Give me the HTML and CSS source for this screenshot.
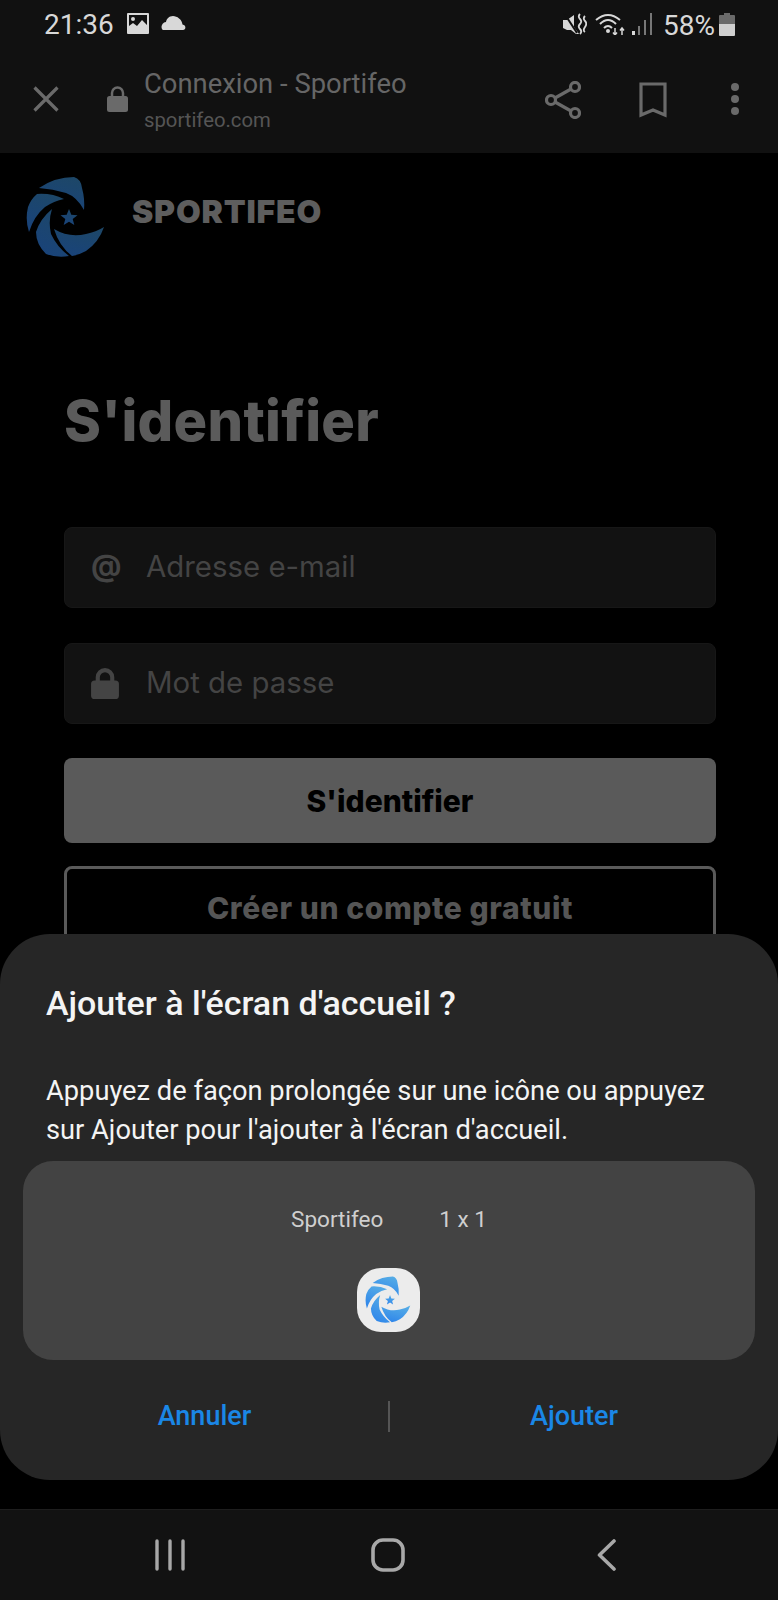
FILE: index.html
```html
<!DOCTYPE html>
<html lang="fr">
<head>
<meta charset="utf-8">
<title>Connexion - Sportifeo</title>
<link rel="stylesheet" href="styles.css">
</head>
<body>
<svg class="defs" aria-hidden="true">
  <defs>
    <linearGradient id="dim" x1="0.7" y1="0" x2="0.3" y2="1"><stop offset="0" stop-color="#1d4768"/><stop offset="1" stop-color="#19437a"/></linearGradient>
    <linearGradient id="bright" x1="0.7" y1="0" x2="0.3" y2="1"><stop offset="0" stop-color="#55ace6"/><stop offset="1" stop-color="#2f86ea"/></linearGradient>
    <symbol id="swirl" viewBox="7 10 79 83">
      <path d="M20 22Q36 11 55 11Q62 13 63 22Q66 33 65 44Q58 31 47 27Q34 23 20 22Z"/>
      <path d="M45 33Q33 27 18 28Q12 33 9 41Q6 54 10 66Q15 50 26 41Q35 35 45 33Z"/>
      <path d="M33 43Q21 53 17 66Q17 78 27 88Q38 92 50 90Q38 81 32 68Q29 55 33 43Z"/>
      <path d="M35 63Q50 72 67 68Q77 66 85 61Q80 76 67 85Q60 89 53 90Q40 80 35 63Z"/>
      <path d="M50 43L52.300 48.800L58.500 49.200L53.700 53.100L55.300 59.100L50 55.800L44.700 59.100L46.300 53.100L41.500 49.200L47.700 48.800Z"/>
    </symbol>
  </defs>
</svg>
<div class="phone">
  <header class="chrome">
    <div class="status">
      <div class="status-left">
        <span class="time">21:36</span>
        <svg class="st-image" viewBox="0 0 22 21"><path fill="#d8d8d8" fill-rule="evenodd" d="M1 0H21a1 1 0 0 1 1 1V20a1 1 0 0 1-1 1H1a1 1 0 0 1-1-1V1a1 1 0 0 1 1-1ZM2 2V13L6 10L10 13L15 7L20 12V2ZM6 4a2 2 0 1 1 0 4a2 2 0 0 1 0-4Z"/></svg>
        <svg class="st-cloud" viewBox="0 0 25 14"><path fill="#d8d8d8" d="M3 14H22C25 14 25.500 9 21.500 8.500C21 3.500 16 0 12 0C8 0 5.500 3 5 6C0 6.500 -1 14 3 14Z"/></svg>
      </div>
      <div class="status-right">
        <svg class="st-mute" viewBox="0 0 24 22"><path fill="#d8d8d8" d="M0 7H4L11 2V14L16 21H13L8 17H4L0 15Z"/><path d="M1 0L14 20" stroke="#111" stroke-width="2"/><path d="M17 1Q14.500 3.500 17 6T17 11T17 16T17 21M22 3Q19.500 5.500 22 8T22 14T22 19" fill="none" stroke="#d8d8d8" stroke-width="1.800"/></svg>
        <svg class="st-wifi" viewBox="0 0 30 22"><g fill="none" stroke="#d8d8d8" stroke-width="2"><path d="M1 7Q13 -3 25 7"/><path d="M5 11Q13 3 21 11"/><path d="M9 15Q13 11 17 15"/></g><circle cx="13" cy="18" r="2" fill="#d8d8d8"/><path d="M20 15V22M18 19.500L20 22L22 19.500M27 22V15M25 17.500L27 15L29 17.500" fill="none" stroke="#d8d8d8" stroke-width="1.500"/></svg>
        <svg class="st-signal" viewBox="0 0 21 22"><rect x="0" y="18" width="3" height="4" fill="#d8d8d8"/><rect x="6" y="13" width="2" height="9" fill="#777"/><rect x="12" y="7" width="2" height="15" fill="#777"/><rect x="18" y="0" width="2" height="22" fill="#777"/></svg>
        <span class="pct">58%</span>
        <svg class="st-batt" viewBox="0 0 16 23"><path fill="#6a6a6a" d="M5 0H11V2H15a1 1 0 0 1 1 1V11H0V3a1 1 0 0 1 1-1H5Z"/><path fill="#cfcfcf" d="M0 11H16V22a1 1 0 0 1-1 1H1a1 1 0 0 1-1-1Z"/></svg>
      </div>
    </div>
    <div class="toolbar">
      <svg class="tb-close" viewBox="0 0 26 26"><path d="M1.500 1.500L24.500 24.500M24.500 1.500L1.500 24.500" stroke="#6a6a6a" stroke-width="3.200" fill="none"/></svg>
      <svg class="tb-lock" viewBox="0 0 21 26"><path d="M5 12V7a5.500 5.500 0 0 1 11 0V12" fill="none" stroke="#6a6a6a" stroke-width="2.500"/><rect x="0" y="10" width="21" height="16" rx="2.500" fill="#6a6a6a"/></svg>
      <div class="url">
        <span class="url-title">Connexion - Sportifeo</span>
        <span class="url-host">sportifeo.com</span>
      </div>
      <div class="tb-actions">
        <svg class="tb-share" viewBox="0 0 36 38"><g fill="none" stroke="#6a6a6a" stroke-width="3.200"><circle cx="6" cy="19" r="4.500"/><circle cx="30" cy="6" r="4.500"/><circle cx="30" cy="32" r="4.500"/><path d="M10 17L26 8M10 21L26 30"/></g></svg>
        <svg class="tb-mark" viewBox="0 0 28 36"><path d="M2 2H26V33L14 28L2 33Z" fill="none" stroke="#6a6a6a" stroke-width="3.200"/></svg>
        <svg class="tb-dots" viewBox="0 0 8 34"><circle cx="4" cy="4" r="4" fill="#6a6a6a"/><circle cx="4" cy="16" r="4" fill="#6a6a6a"/><circle cx="4" cy="28" r="4" fill="#6a6a6a"/></svg>
      </div>
    </div>
  </header>

  <main class="page">
    <div class="brand">
      <svg class="brand-logo" fill="url(#dim)"><use href="#swirl"/></svg>
      <span class="brand-name">SPORTIFEO</span>
    </div>
    <h1 class="heading">S'identifier</h1>
    <form class="form">
      <div class="field">
        <span class="field-at">@</span>
        <span class="field-text">Adresse e-mail</span>
      </div>
      <div class="field">
        <svg class="field-lock" viewBox="0 0 27 30"><path d="M6.500 14V9a7 7 0 0 1 14 0V14" fill="none" stroke="#444" stroke-width="4"/><rect y="12" width="27" height="18" rx="3.500" fill="#444"/></svg>
        <span class="field-text">Mot de passe</span>
      </div>
      <div class="btn btn-solid">S'identifier</div>
      <div class="btn btn-outline">Créer un compte gratuit</div>
    </form>
  </main>

  <nav class="navbar">
    <svg class="nav-recent" viewBox="0 0 30 32"><g stroke="#a8a8a8" stroke-width="3.400" stroke-linecap="round"><path d="M2 2V30M15 2V30M28 2V30"/></g></svg>
    <svg class="nav-home" viewBox="0 0 34 34"><rect x="2" y="2" width="30" height="30" rx="10" fill="none" stroke="#a8a8a8" stroke-width="3.600"/></svg>
    <svg class="nav-back" viewBox="0 0 19 32"><path d="M17 2L2.500 16L17 30" fill="none" stroke="#a8a8a8" stroke-width="3.600" stroke-linecap="round" stroke-linejoin="round"/></svg>
  </nav>

  <section class="sheet">
    <h2 class="sheet-title">Ajouter à l'écran d'accueil ?</h2>
    <p class="sheet-text">Appuyez de façon prolongée sur une icône ou appuyez sur Ajouter pour l'ajouter à l'écran d'accueil.</p>
    <div class="preview">
      <div class="preview-labels"><span>Sportifeo</span><span>1 x 1</span></div>
      <div class="app-icon"><svg class="app-swirl" fill="url(#bright)"><use href="#swirl"/></svg></div>
    </div>
    <div class="sheet-actions">
      <span class="action">Annuler</span>
      <span class="divider"></span>
      <span class="action">Ajouter</span>
    </div>
  </section>
</div>
</body>
</html>
```

FILE: styles.css
```css
* { box-sizing: border-box; }
html, body { margin: 0; padding: 0; background: #000; }
body { font-family: Roboto, "Liberation Sans", sans-serif; }
svg { display: block; flex: none; }
.defs { position: absolute; width: 0; height: 0; }

.phone {
  position: relative;
  width: 778px;
  height: 1600px;
  overflow: hidden;
  display: flex;
  flex-direction: column;
  background: #000;
}

/* browser chrome */
.chrome { height: 153px; background: #111; flex: none; }
.status {
  height: 50px;
  display: flex;
  justify-content: space-between;
  align-items: center;
  padding: 0 43px 0 44px;
}
.status-left, .status-right { display: flex; align-items: center; }
.time { font-size: 28px; color: #d8d8d8; line-height: 50px; width: 83px; }
.st-image { width: 22px; height: 21px; margin-top: -3px; }
.st-cloud { width: 25px; height: 14px; margin: -4px 0 0 12px; }
.st-mute { width: 24px; height: 22px; margin-top: -3px; }
.st-wifi { width: 30px; height: 22px; margin: -3px 0 0 8px; }
.st-signal { width: 21px; height: 22px; margin: -2px 0 0 7px; }
.pct { font-size: 28px; color: #d8d8d8; margin-left: 10px; width: 56px; }
.st-batt { width: 16px; height: 23px; margin-top: -2px; }

.toolbar {
  height: 103px;
  display: flex;
  align-items: center;
  padding: 0 39px 4px 33px;
}
.tb-close { width: 26px; height: 26px; margin-top: -2px; }
.tb-lock { width: 21px; height: 26px; margin: -2px 0 0 48px; }
.url { display: flex; flex-direction: column; margin: 2px 0 0 16px; }
.url-title { font-size: 27.400px; line-height: 32px; color: #666; }
.url-host { font-size: 20.300px; line-height: 28px; color: #555; margin-top: 6px; }
.tb-actions { margin-left: auto; display: flex; align-items: center; }
.tb-share { width: 36px; height: 38px; }
.tb-mark { width: 28px; height: 36px; margin-left: 58px; }
.tb-dots { width: 8px; height: 34px; margin-left: 64px; }

/* page */
.page { flex: 1; min-height: 0; padding: 23px 62px 0 64px; }
.brand { display: flex; align-items: center; margin-left: -38px; }
.brand-logo { width: 79px; height: 83px; }
.brand-name {
  font-family: Inter, "Liberation Sans", sans-serif;
  font-size: 32px;
  font-weight: 900;
  color: #5e5e5e;
  margin: -12px 0 0 27px;
  letter-spacing: 0.8px;
}
.heading {
  font-family: Inter, "Liberation Sans", sans-serif;
  font-size: 56px;
  line-height: 60px;
  font-weight: 800;
  color: #5b5b5b;
  margin: 132px 0 0;
  letter-spacing: 0.3px;
}
.form { display: flex; flex-direction: column; margin-top: 76px; }
.field {
  height: 81px;
  background: #121212;
  border: 1px solid #171717;
  border-radius: 8px;
  display: flex;
  align-items: center;
  padding-left: 26px;
  margin-bottom: 35px;
}
.field + .field { margin-bottom: 34px; }
.field-at {
  font-family: Inter, "Liberation Sans", sans-serif;
  font-size: 30px;
  font-weight: 700;
  color: #444;
  width: 55px;
  margin-top: -5px;
}
.field-lock { width: 28px; height: 31px; margin-right: 27px; }
.field-text {
  font-family: Inter, "Liberation Sans", sans-serif;
  font-size: 29.400px;
  color: #444;
  margin-top: -3px;
}
.btn {
  display: flex;
  align-items: center;
  justify-content: center;
  border-radius: 8px;
  font-family: Inter, "Liberation Sans", sans-serif;
  font-size: 30px;
  font-weight: 800;
}
.btn-solid { height: 85px; background: #5a5a5a; color: #000; }
.btn-outline {
  height: 84px;
  margin-top: 23px;
  border: 3px solid #5a5a5a;
  color: #555;
  letter-spacing: 0.6px;
}

/* bottom sheet */
.sheet {
  position: absolute;
  left: 0;
  right: 0;
  top: 934px;
  height: 546px;
  background: #262626;
  border-radius: 50px;
  display: flex;
  flex-direction: column;
  padding: 47px 23px 0;
  color: #f4f4f4;
}
.sheet-title {
  margin: 0 23px;
  font-size: 34px;
  line-height: 44px;
  font-weight: 500;
}
.sheet-text {
  margin: 47px 23px 0;
  font-size: 27.250px;
  line-height: 39px;
  height: 78px;
}
.preview {
  margin-top: 11px;
  height: 199px;
  background: #434343;
  border-radius: 30px;
  display: flex;
  flex-direction: column;
  align-items: center;
}
.preview-labels {
  display: flex;
  gap: 56px;
  font-size: 22.500px;
  line-height: 28px;
  color: #cfcfcf;
  margin-top: 44px;
}
.app-icon {
  width: 63px;
  height: 64px;
  margin: 35px 2px 0 0;
  background: #ececec;
  border-radius: 24px;
  display: flex;
  align-items: center;
  justify-content: center;
}
.app-swirl { width: 46px; height: 48px; }
.sheet-actions {
  display: grid;
  grid-template-columns: 1fr 2px 1fr;
  align-items: center;
  margin-top: 39px;
  height: 34px;
}
.action {
  font-size: 27px;
  font-weight: 500;
  color: #1a87e6;
  text-align: center;
}
.action:first-child { padding-right: 2px; }
.action:last-child { padding-left: 3px; }
.divider { width: 2px; height: 31px; background: #555; }

/* nav bar */
.navbar {
  flex: none;
  height: 91px;
  background: #121212;
  border-top: 1px solid #1e1e1e;
  display: grid;
  grid-template-columns: 1fr 1fr 1fr;
  align-items: center;
  justify-items: center;
  padding: 0 63px 0 61px;
}
.nav-recent { width: 30px; height: 32px; }
.nav-home { width: 34px; height: 34px; }
.nav-back { width: 19px; height: 32px; }
```
